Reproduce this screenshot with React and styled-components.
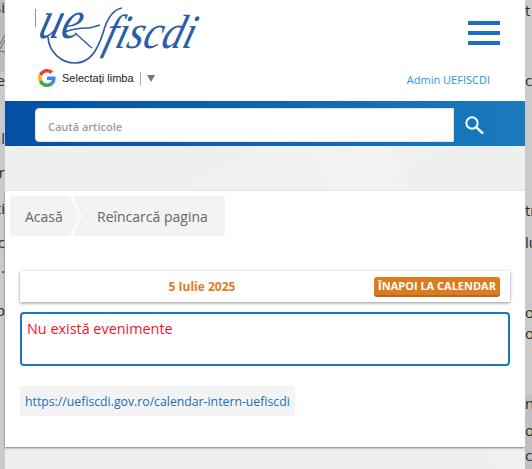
import React from 'react';
import styled, { createGlobalStyle } from 'styled-components';

const GlobalStyle = createGlobalStyle`
  html, body {
    margin: 0;
    padding: 0;
    background: #c8c8c8;
    font-family: "Open Sans", "Liberation Sans", sans-serif;
  }
`;

// Frame: the grey page behind the modal, then the modal, then grey again
const Frame = styled.div`
  display: grid;
  grid-template-columns: 5px 520px 7px;
  width: 532px;
  height: 469px;
  overflow: hidden;
`;

const Strip = styled.div`
  display: flex;
  flex-direction: column;
  align-items: ${props => (props.$side === 'left' ? 'flex-end' : 'flex-start')};
  height: 469px;
  overflow: hidden;
  background: linear-gradient(
    to bottom,
    ${props => (props.$side === 'left' ? '#bdbdbd 0, #bdbdbd 72px, #cacaca 72px' : '#cacaca 0, #cacaca 395px, #bfbfbf 395px')}
  );
`;

const Peek = styled.span`
  flex: none;
  height: 14px;
  margin-top: ${props => props.$gap}px;
  font-size: 15px;
  line-height: 14px;
  color: #2a2a2a;
  white-space: nowrap;
`;

const Modal = styled.div`
  display: flex;
  flex-direction: column;
  height: 469px;
  background-color: #eeefef;
  background-image:
    linear-gradient(150deg, transparent 0 38%, rgba(255, 255, 255, 0.12) 38% 52%, transparent 52%),
    linear-gradient(60deg, transparent 0 62%, rgba(255, 255, 255, 0.15) 62% 72%, transparent 72%);
`;

const Header = styled.header`
  display: flex;
  justify-content: space-between;
  height: 101px;
  flex: none;
  background: #fff;
`;

const Brand = styled.div`
  display: flex;
  flex-direction: column;
  padding: 6px 0 0 29px;
`;

const Translate = styled.div`
  display: flex;
  align-items: center;
  margin: 5px 0 0 4px;
  font-family: "Liberation Sans", Arial, sans-serif;
  font-size: 11px;
  color: #222;
`;

const TranslateLabel = styled.span`
  margin-left: 6px;
  padding-right: 6px;
  border-right: 1px solid #aaa;
  line-height: 13px;
`;

const Caret = styled.span`
  width: 0;
  height: 0;
  margin-left: 6px;
  border-left: 4px solid transparent;
  border-right: 4px solid transparent;
  border-top: 7px solid #767676;
`;

const HeaderSide = styled.div`
  display: flex;
  flex-direction: column;
  align-items: flex-end;
  padding: 21px 25px 0 0;
`;

const MenuButton = styled.div`
  display: flex;
  flex-direction: column;
  gap: 6px;
  width: 32px;
`;

const MenuBar = styled.span`
  height: 4px;
  background: #1a70be;
`;

const AdminLink = styled.a`
  margin: 27px 10px 0 0;
  font-size: 11px;
  line-height: 16px;
  color: #2a97e0;
`;

const SearchBand = styled.div`
  display: flex;
  flex: none;
  height: 45px;
  padding: 7px 0 4px 30px;
  box-sizing: border-box;
  background: linear-gradient(to right, #034fa5, #1b7bbd);
`;

const SearchInput = styled.div`
  display: flex;
  align-items: center;
  width: 419px;
  height: 34px;
  padding: 2px 0 0 12px;
  box-sizing: border-box;
  background: #fff;
  border: 1px solid #e4e4e4;
  border-radius: 4px 0 0 4px;
  font-size: 11px;
  font-weight: 600;
  color: #9c9c9c;
`;

const SearchButton = styled.div`
  display: flex;
  align-items: center;
  justify-content: center;
  width: 39px;
  background: #1775bc;
`;

const Hero = styled.div`
  flex: none;
  height: 45px;
`;

const Content = styled.main`
  display: flex;
  flex-direction: column;
  align-items: flex-start;
  flex: none;
  height: 256px;
  padding: 5px 15px 0;
  box-sizing: border-box;
  background: #fff;
  box-shadow: 0 1px 2px rgba(0, 0, 0, 0.5);
`;

const Breadcrumbs = styled.nav`
  display: flex;
  height: 40px;
  margin-left: -10px;
`;

const Crumb = styled.a`
  display: flex;
  align-items: center;
  height: 40px;
  box-sizing: border-box;
  background: #f3f3f3;
  font-size: 14px;
  color: #666;
  border-radius: 3px;
`;

const FirstCrumb = styled(Crumb)`
  width: 70px;
  padding-left: 15px;
  clip-path: polygon(0 0, 60px 0, 70px 50%, 60px 100%, 0 100%);
`;

const NextCrumb = styled(Crumb)`
  width: 153px;
  margin-left: -8px;
  padding-left: 25px;
  clip-path: polygon(0 0, 100% 0, 100% 100%, 0 100%, 10px 50%);
`;

const DayBar = styled.div`
  display: flex;
  align-items: center;
  align-self: stretch;
  height: 31px;
  margin-top: 35px;
  padding-right: 10px;
  background: #fff;
  box-shadow: 0 1px 3px rgba(0, 0, 0, 0.45);
`;

const DayTitle = styled.span`
  flex: 1;
  padding-left: 10px;
  text-align: center;
  font-size: 12px;
  font-weight: 700;
  color: #e27b1f;
`;

const BackButton = styled.a`
  display: flex;
  align-items: center;
  justify-content: center;
  width: 126px;
  height: 20px;
  box-sizing: border-box;
  background: #dd7b20;
  border-bottom: 2px solid #b9651a;
  border-radius: 3px;
  font-size: 11px;
  font-weight: 700;
  color: #fff;
  white-space: nowrap;
`;

const EventBox = styled.div`
  align-self: stretch;
  height: 54px;
  margin-top: 10px;
  padding: 5px 5px;
  box-sizing: border-box;
  border: 2px solid #1a78c2;
  border-radius: 4px;
  font-size: 14.4px;
  line-height: 19px;
  color: #f0142f;
`;

const CalendarLink = styled.a`
  display: flex;
  align-items: center;
  height: 30px;
  margin-top: 20px;
  padding: 0 5px;
  background: #f3f3f3;
  font-size: 12.25px;
  color: #1a6fb5;
`;

const Logo = () => (
  <svg width="166" height="58" viewBox="0 0 166 58" aria-label="uefiscdi">
    <path d="M1.5 3v18" stroke="#6d9bd0" strokeWidth="1" fill="none" />
    <g
      fill="#2b5fa5"
      fontFamily="'Liberation Serif', serif"
      fontStyle="italic"
      transform="translate(10 0) skewX(-16)"
    >
      <text x="2" y="32" fontSize="54" textLength="42" lengthAdjust="spacingAndGlyphs">ue</text>
      <text x="70" y="42" fontSize="48" textLength="90" lengthAdjust="spacingAndGlyphs">fiscdi</text>
    </g>
    <path
      d="M14 31C15 46 27 57 41 57C55 57 63 46 69 27C72 16 77 4 88 2"
      stroke="#2b5fa5"
      strokeWidth="1.7"
      fill="none"
    />
    <path
      d="M31 26C38 23 46 22 54 22C58 22 62 20 66 19M41 27C46 31 52 37 58 42"
      stroke="#2b5fa5"
      strokeWidth="1.4"
      fill="none"
    />
  </svg>
);

const GoogleMark = () => (
  <svg width="18" height="18" viewBox="0 0 48 48" aria-hidden="true">
    <path fill="#EA4335" d="M24 9.5c3.5 0 6.7 1.2 9.2 3.6l6.9-6.9C35.9 2.4 30.5 0 24 0 14.6 0 6.5 5.4 2.6 13.2l8 6.2C12.4 13.7 17.7 9.5 24 9.5z" />
    <path fill="#4285F4" d="M46.9 24.5c0-1.6-.1-3.1-.4-4.5H24v9h12.9c-.6 3-2.2 5.5-4.7 7.2l7.7 6c4.500-4.200 7-10.300 7-17.700z" />
    <path fill="#FBBC05" d="M10.500 28.600c-.5-1.400-.8-3-.8-4.600s.3-3.200.8-4.600l-8-6.200C.9 16.500 0 20.100 0 24s.9 7.500 2.600 10.800l7.900-6.200z" />
    <path fill="#34A853" d="M24 48c6.500 0 11.900-2.100 15.900-5.800l-7.700-6c-2.200 1.400-4.900 2.300-8.200 2.300-6.300 0-11.600-4.200-13.500-10l-8 6.200C6.500 42.600 14.600 48 24 48z" />
  </svg>
);

const SearchIcon = () => (
  <svg width="20" height="20" viewBox="0 0 20 20" aria-hidden="true">
    <circle cx="8" cy="8" r="5.700" stroke="#fff" strokeWidth="2" fill="none" />
    <path d="M12.300 12.300L19 18.500" stroke="#fff" strokeWidth="2.400" fill="none" />
  </svg>
);

const StrayIcon = styled.svg`
  flex: none;
  margin-top: 18px;
`;

const App = () => {
  return (
    <>
      <GlobalStyle />
      <Frame>
        <Strip $side="left">
          <Peek $gap={0}>și</Peek>
          <StrayIcon width="5" height="22" viewBox="0 0 5 22" aria-hidden="true">
            <path d="M0 12L5 3M0 17L5 8M0 19L5 20" stroke="#666" strokeWidth="1" fill="none" />
          </StrayIcon>
          <Peek $gap={19}>e</Peek>
          <Peek $gap={44}>.l</Peek>
          <Peek $gap={20}>r</Peek>
          <Peek $gap={22}>ti</Peek>
          <Peek $gap={20}>oc</Peek>
          <Peek $gap={11}>.</Peek>
          <Peek $gap={29}>p</Peek>
        </Strip>
        <Modal>
          <Header>
            <Brand>
              <Logo />
              <Translate>
                <GoogleMark />
                <TranslateLabel>Selectați limba</TranslateLabel>
                <Caret />
              </Translate>
            </Brand>
            <HeaderSide>
              <MenuButton>
                <MenuBar />
                <MenuBar />
                <MenuBar />
              </MenuButton>
              <AdminLink>Admin UEFISCDI</AdminLink>
            </HeaderSide>
          </Header>
          <SearchBand>
            <SearchInput>Caută articole</SearchInput>
            <SearchButton>
              <SearchIcon />
            </SearchButton>
          </SearchBand>
          <Hero />
          <Content>
            <Breadcrumbs>
              <FirstCrumb>Acasă</FirstCrumb>
              <NextCrumb>Reîncarcă pagina</NextCrumb>
            </Breadcrumbs>
            <DayBar>
              <DayTitle>5 Iulie 2025</DayTitle>
              <BackButton>ÎNAPOI LA CALENDAR</BackButton>
            </DayBar>
            <EventBox>Nu există evenimente</EventBox>
            <CalendarLink>https://uefiscdi.gov.ro/calendar-intern-uefiscdi</CalendarLink>
          </Content>
        </Modal>
        <Strip $side="right">
          <Peek $gap={3}>t</Peek>
          <Peek $gap={56}>c</Peek>
          <Peek $gap={116}>tr</Peek>
          <Peek $gap={18}>lu</Peek>
          <Peek $gap={56}>oc</Peek>
          <Peek $gap={7}>o</Peek>
          <Peek $gap={56}>na</Peek>
          <Peek $gap={13}>ol</Peek>
          <Peek $gap={11}>c</Peek>
        </Strip>
      </Frame>
    </>
  );
};

export default App;
